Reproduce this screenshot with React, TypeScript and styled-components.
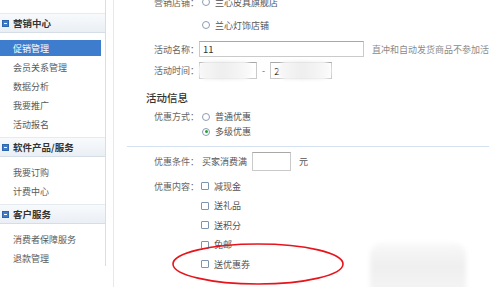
import React from "react";
import styled, { createGlobalStyle } from "styled-components";

const Global = createGlobalStyle`
  *, *::before, *::after { box-sizing: border-box; }
  html, body { margin: 0; padding: 0; background: #fff; overflow: hidden; }
  body { font-family: "Noto Sans CJK SC", "Noto Sans", sans-serif; }
`;

const Page = styled.div`
  position: relative;
  width: 489px;
  height: 287px;
  overflow: hidden;
  display: flex;
  align-items: stretch;
`;

const Sidebar = styled.nav`
  width: 106px;
  flex: none;
  align-self: flex-start;
  border-right: 1px solid #d9dee4;
  padding-top: 13px;
`;

const GroupHeader = styled.div`
  height: 20px;
  display: flex;
  align-items: center;
  gap: 4px;
  padding-left: 2px;
  background: linear-gradient(#f8fafc, #eaeff5);
  border-top: 1px solid #e6ebf0;
  border-bottom: 1px solid #d5dde6;
  font-size: 9.5px;
  font-weight: bold;
  color: #333;
`;

const MinusIcon = styled.span`
  width: 7px;
  height: 7px;
  background: #3d7dcc;
  border: 1px solid #2d66ad;
  display: flex;
  align-items: center;
  justify-content: center;
  &::after {
    content: "";
    width: 3px;
    height: 1px;
    background: #fff;
  }
`;

const ItemList = styled.div<{ $last?: boolean }>`
  padding: 7px 4px ${(p) => (p.$last ? 0 : 5)}px 0;
  display: flex;
  flex-direction: column;
  gap: 3px;
`;

const Item = styled.div<{ $active?: boolean }>`
  height: 16px;
  display: flex;
  align-items: center;
  padding-left: 13px;
  font-size: 9px;
  color: ${(p) => (p.$active ? "#fff" : "#5a5a5a")};
  background: ${(p) => (p.$active ? "#3e7dcd" : "transparent")};
`;

const Main = styled.main`
  flex: 1;
  margin-left: 7px;
  border-left: 1px solid #e4e9ef;
`;

const Form = styled.div`
  margin-top: -10px;
  display: flex;
  flex-direction: column;
`;

const Row = styled.div<{ $h: number }>`
  height: ${(p) => p.$h}px;
  display: grid;
  grid-template-columns: 85px 1fr;
  align-items: center;
`;

const Label = styled.span`
  font-size: 9px;
  color: #666;
  text-align: right;
  white-space: nowrap;
`;

const Field = styled.div`
  display: flex;
  align-items: center;
  white-space: nowrap;
`;

const OptionText = styled.span`
  font-size: 9px;
  color: #555;
`;

const RadioDot = styled.span<{ $checked?: boolean }>`
  width: 8px;
  height: 8px;
  border-radius: 50%;
  border: 1px solid #8c9db2;
  background: #fff;
  margin: 0 5px 0 3px;
  display: flex;
  align-items: center;
  justify-content: center;
  &::after {
    content: "";
    width: 3px;
    height: 3px;
    border-radius: 50%;
    background: ${(p) => (p.$checked ? "#2d9c3c" : "transparent")};
  }
`;

const CheckBox = styled.span`
  width: 8px;
  height: 8px;
  border: 1px solid #7f95ae;
  background: #fff;
  border-radius: 1px;
  margin: 0 5px 0 2px;
`;

const TextInput = styled.div<{ $w: number; $h: number }>`
  position: relative;
  width: ${(p) => p.$w}px;
  height: ${(p) => p.$h}px;
  border: 1px solid #cacaca;
  border-top-color: #a8a8a8;
  background: #fff;
  font-size: 9.5px;
  color: #333;
  display: flex;
  align-items: center;
  padding-left: 3px;
  overflow: visible;
`;

const Hint = styled.span`
  margin-left: 8px;
  font-size: 9px;
  color: #8a8a8a;
`;

const Dash = styled.span`
  margin: 0 5px;
  font-size: 9px;
  color: #666;
`;

const Smudge = styled.div<{ $l: number; $r: number }>`
  position: absolute;
  top: -2px;
  bottom: -2px;
  left: ${(p) => p.$l}px;
  right: ${(p) => p.$r}px;
  border-radius: 9px;
  background: linear-gradient(90deg, #f8f8f8, #eeeeee 45%, #f4f4f4 75%, #fbfbfb);
  filter: blur(1.5px);
`;

const SectionTitle = styled.div`
  margin-top: 6px;
  height: 24px;
  display: flex;
  align-items: center;
  padding-left: 32px;
  font-size: 10.5px;
  color: #333;
  font-weight: 500;
`;

const Divider = styled.div`
  margin: 6.5px 0 0 13px;
  height: 1px;
  background: #d4e1f0;
`;

const Unit = styled.span`
  margin-left: 8px;
  font-size: 9px;
  color: #555;
`;

const Prefix = styled.span`
  margin: 0 5px 0 3px;
  font-size: 9px;
  color: #555;
`;

const BlurBlob = styled.div`
  position: absolute;
  left: 370px;
  top: 243px;
  width: 96px;
  height: 50px;
  border-radius: 12px 12px 0 0;
  background: linear-gradient(#f9f9f9, #efefef 45%, #f5f5f5);
  filter: blur(2px);
`;

const Overlay = styled.svg`
  position: absolute;
  left: 0;
  top: 0;
  pointer-events: none;
`;

const groups = [
  { title: "营销中心", items: ["促销管理", "会员关系管理", "数据分析", "我要推广", "活动报名"] },
  { title: "软件产品/服务", items: ["我要订购", "计费中心"] },
  { title: "客户服务", items: ["消费者保障服务", "退款管理"] },
];

const gifts = ["减现金", "送礼品", "送积分", "免邮", "送优惠券"];

export default function App() {
  return (
    <Page>
      <Global />
      <Sidebar>
        {groups.map((g, gi) => (
          <div key={g.title}>
            <GroupHeader>
              <MinusIcon />
              {g.title}
            </GroupHeader>
            <ItemList $last={gi === groups.length - 1}>
              {g.items.map((it) => (
                <Item key={it} $active={it === "促销管理"}>
                  {it}
                </Item>
              ))}
            </ItemList>
          </div>
        ))}
      </Sidebar>
      <Main>
        <Form>
          <Row $h={24}>
            <Label>营销店铺：</Label>
            <Field>
              <RadioDot />
              <OptionText>兰心皮具旗舰店</OptionText>
            </Field>
          </Row>
          <Row $h={22}>
            <span />
            <Field>
              <RadioDot />
              <OptionText>兰心灯饰店铺</OptionText>
            </Field>
          </Row>
          <Row $h={26}>
            <Label>活动名称：</Label>
            <Field>
              <TextInput $w={165} $h={16}>11</TextInput>
              <Hint>直冲和自动发货商品不参加活动</Hint>
            </Field>
          </Row>
          <Row $h={17}>
            <Label>活动时间：</Label>
            <Field>
              <TextInput $w={58} $h={17}>
                <Smudge $l={-2} $r={4} />
              </TextInput>
              <Dash>-</Dash>
              <TextInput $w={62} $h={17}>
                2
                <Smudge $l={7} $r={0} />
              </TextInput>
            </Field>
          </Row>
          <SectionTitle>活动信息</SectionTitle>
          <Row $h={15}>
            <Label>优惠方式：</Label>
            <Field>
              <RadioDot />
              <OptionText>普通优惠</OptionText>
            </Field>
          </Row>
          <Row $h={15}>
            <span />
            <Field>
              <RadioDot $checked />
              <OptionText>多级优惠</OptionText>
            </Field>
          </Row>
          <Divider />
          <Row $h={30}>
            <Label>优惠条件：</Label>
            <Field>
              <Prefix>买家消费满</Prefix>
              <TextInput $w={39} $h={19} />
              <Unit>元</Unit>
            </Field>
          </Row>
          {gifts.map((g, i) => (
            <Row key={g} $h={19.5}>
              {i === 0 ? <Label>优惠内容：</Label> : <span />}
              <Field>
                <CheckBox />
                <OptionText>{g}</OptionText>
              </Field>
            </Row>
          ))}
        </Form>
      </Main>
      <BlurBlob />
      <Overlay width="489" height="287" viewBox="0 0 489 287">
        <ellipse cx="258" cy="264" rx="85" ry="20" fill="none" stroke="#e8141b" strokeWidth="1.6" />
      </Overlay>
    </Page>
  );
}
